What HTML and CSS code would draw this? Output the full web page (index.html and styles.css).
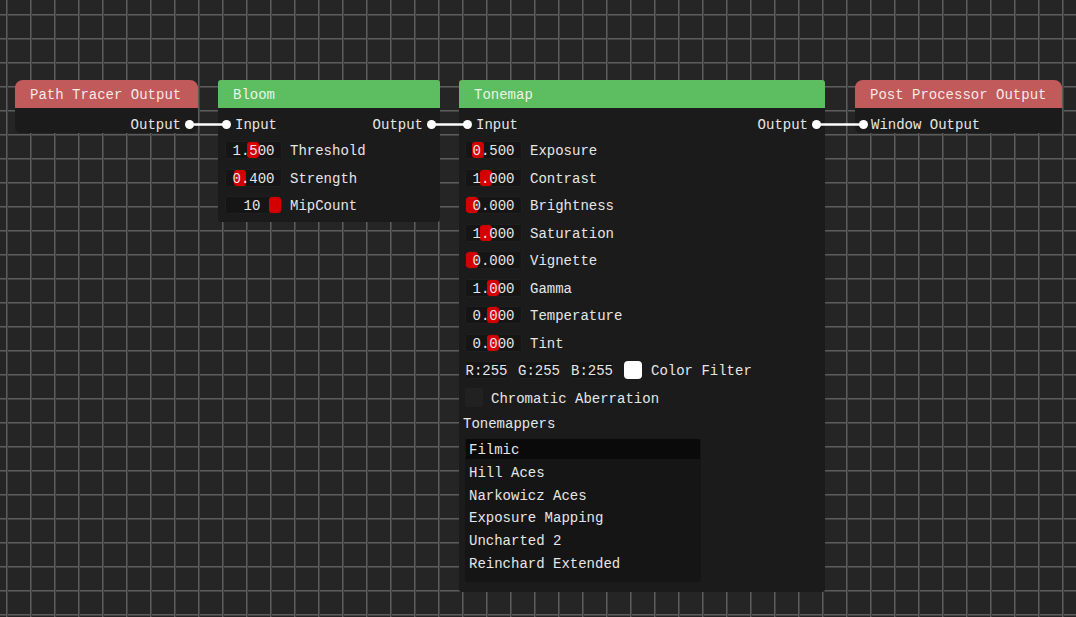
FILE: index.html
```html
<!DOCTYPE html>
<html>
<head>
<meta charset="utf-8">
<title>Node Editor</title>
<link rel="stylesheet" href="styles.css">
</head>
<body>
<div class="canvas">

  <div class="node node-path">
    <div class="title title-red">Path Tracer Output</div>
    <div class="body">
      <div class="pinrow out"><span class="txt">Output</span><i class="pin"></i></div>
    </div>
  </div>

  <div class="node node-bloom">
    <div class="title title-green">Bloom</div>
    <div class="body">
      <div class="pinrow"><i class="pin"></i><span class="txt">Input</span><span class="spacer"></span><span class="txt">Output</span><i class="pin"></i></div>
      <div class="params">
        <div class="param"><div class="drag"><b class="handle" style="left:22px"></b><span class="txt">1.500</span></div><span class="txt">Threshold</span></div>
        <div class="param"><div class="drag"><b class="handle" style="left:9px"></b><span class="txt">0.400</span></div><span class="txt">Strength</span></div>
        <div class="param"><div class="drag"><b class="handle" style="left:44px"></b><span class="txt intval">10</span></div><span class="txt">MipCount</span></div>
      </div>
    </div>
  </div>

  <div class="node node-tone">
    <div class="title title-green">Tonemap</div>
    <div class="body">
      <div class="pinrow"><i class="pin"></i><span class="txt">Input</span><span class="spacer"></span><span class="txt">Output</span><i class="pin"></i></div>
      <div class="params">
        <div class="param"><div class="drag"><b class="handle" style="left:7px"></b><span class="txt">0.500</span></div><span class="txt">Exposure</span></div>
        <div class="param"><div class="drag"><b class="handle" style="left:15px"></b><span class="txt">1.000</span></div><span class="txt">Contrast</span></div>
        <div class="param"><div class="drag"><b class="handle" style="left:1px"></b><span class="txt">0.000</span></div><span class="txt">Brightness</span></div>
        <div class="param"><div class="drag"><b class="handle" style="left:15px"></b><span class="txt">1.000</span></div><span class="txt">Saturation</span></div>
        <div class="param"><div class="drag"><b class="handle" style="left:1px"></b><span class="txt">0.000</span></div><span class="txt">Vignette</span></div>
        <div class="param"><div class="drag"><b class="handle" style="left:22px"></b><span class="txt">1.000</span></div><span class="txt">Gamma</span></div>
        <div class="param"><div class="drag"><b class="handle" style="left:22px"></b><span class="txt">0.000</span></div><span class="txt">Temperature</span></div>
        <div class="param"><div class="drag"><b class="handle" style="left:22px"></b><span class="txt">0.000</span></div><span class="txt">Tint</span></div>
        <div class="colorrow">
          <div class="cbox cbox-r">R:255</div>
          <div class="cbox cbox-g">G:255</div>
          <div class="cbox cbox-b">B:255</div>
          <div class="swatch"></div>
          <span class="txt cflabel">Color Filter</span>
        </div>
        <div class="checkrow"><div class="check"></div><span class="txt">Chromatic Aberration</span></div>
        <div class="section">Tonemappers</div>
      </div>
      <div class="list">
        <div class="item sel">Filmic</div>
        <div class="item">Hill Aces</div>
        <div class="item">Narkowicz Aces</div>
        <div class="item">Exposure Mapping</div>
        <div class="item">Uncharted 2</div>
        <div class="item">Reinchard Extended</div>
      </div>
    </div>
  </div>

  <div class="node node-post">
    <div class="title title-red">Post Processor Output</div>
    <div class="body">
      <div class="pinrow in"><i class="pin"></i><span class="txt">Window Output</span></div>
    </div>
  </div>

  <svg class="links" width="1076" height="617" viewBox="0 0 1076 617">
    <line x1="189.5" y1="124.5" x2="226.5" y2="124.5"/>
    <line x1="431.5" y1="124.5" x2="467.5" y2="124.5"/>
    <line x1="816.5" y1="124.5" x2="863.5" y2="124.5"/>
  </svg>
</div>
</body>
</html>
```

FILE: styles.css
```css
html, body {
  margin: 0;
  padding: 0;
  background: #252525;
}

body {
  font-family: "Liberation Mono", "DejaVu Sans Mono", monospace;
  font-size: 14px;
  color: #e6e6e6;
}

.canvas {
  position: relative;
  width: 1076px;
  height: 617px;
  overflow: hidden;
  background-color: #252525;
  background-image:
    linear-gradient(to right, #5c5c5c 0 1px, #424242 1px 2px, transparent 2px),
    linear-gradient(to bottom, #5c5c5c 0 1px, #424242 1px 2px, transparent 2px);
  background-size: 24px 24px;
  background-position: 6px 14px;
}

.node {
  position: absolute;
  top: 80px;
  display: flex;
  flex-direction: column;
}

.node-path { left: 15px; width: 183px; }
.node-bloom { left: 218px; width: 222px; }
.node-tone { left: 459px; width: 366px; }
.node-post { left: 855px; width: 207px; }

.title {
  box-sizing: border-box;
  height: 28px;
  line-height: 28px;
  padding-top: 1px;
  padding-left: 15px;
  color: rgba(255, 255, 255, 0.88);
  white-space: nowrap;
  overflow: hidden;
}

.title-red { background: #c15b5b; }
.title-green { background: #5cbe60; }

.node-path .title,
.node-post .title { border-radius: 8px 8px 0 0; }

.node-bloom .title,
.node-tone .title { border-radius: 3px 3px 0 0; }

.body {
  background: #1b1b1b;
  padding-top: 7px;
}

.node-path .body,
.node-post .body { border-radius: 0 0 6px 6px; }

.node-bloom .body {
  border-radius: 0 0 3px 3px;
  padding-bottom: 8px;
}

.node-tone .body {
  border-radius: 0 0 3px 3px;
  padding-bottom: 10px;
}

/* text inside 18px rows sits 1px below centre, as the pixel font does */
.txt {
  line-height: 18px;
  padding-top: 2px;
}

.pinrow {
  display: flex;
  align-items: center;
  height: 18px;
  padding: 0 4px;
  gap: 4px;
  white-space: nowrap;
}

.pinrow.out { justify-content: flex-end; }
.pinrow.in { gap: 3px; }

.spacer { flex: 1; }

.pin {
  display: block;
  flex: none;
  width: 9px;
  height: 9px;
  border-radius: 50%;
  background: #ffffff;
}

.params {
  display: flex;
  flex-direction: column;
  gap: 9.5px;
  margin-top: 8px;
  padding-left: 7px;
}

.node-tone .params { padding-left: 6px; }

.param {
  display: flex;
  align-items: center;
  height: 18px;
  gap: 8px;
  white-space: nowrap;
}

.drag {
  position: relative;
  flex: none;
  width: 57px;
  height: 18px;
  background: #151515;
  border-radius: 3px;
  box-shadow: inset 0 0 0 1px #1f1f1f;
  display: flex;
  align-items: center;
  justify-content: center;
}

.drag .txt {
  position: relative;
}

.drag .intval {
  margin-right: 3px;
}

.handle {
  position: absolute;
  top: 1px;
  width: 12px;
  height: 16px;
  background: #d40000;
  border-radius: 3px;
}

.colorrow {
  display: flex;
  align-items: center;
  height: 18px;
  gap: 10px;
  white-space: nowrap;
}

.cbox {
  box-sizing: border-box;
  height: 18px;
  line-height: 18px;
  padding-top: 1px;
  background: #151515;
  border-radius: 2px;
  box-shadow: inset 0 0 0 1px #1f1f1f;
  text-align: center;
}

.cbox-r { width: 43px; }
.cbox-g { width: 42px; }
.cbox-b { width: 44px; }

.swatch {
  width: 18px;
  height: 18px;
  background: #ffffff;
  border-radius: 4px;
}

.cflabel { margin-left: -1px; }

.checkrow {
  display: flex;
  align-items: center;
  height: 18px;
  gap: 8px;
  white-space: nowrap;
}

.check {
  width: 18px;
  height: 19px;
  background: #212121;
  border-radius: 2px;
}

.section {
  box-sizing: border-box;
  height: 18px;
  line-height: 18px;
  padding-top: 1px;
  margin-top: -2px;
  margin-left: -2px;
}

.list {
  box-sizing: border-box;
  margin-top: 7px;
  margin-left: 6px;
  width: 236px;
  height: 143px;
  padding: 0 1px;
  background: #151515;
  border-radius: 2px;
  display: flex;
  flex-direction: column;
  gap: 2.8px;
}

.item {
  box-sizing: border-box;
  height: 20px;
  line-height: 20px;
  padding-top: 1px;
  padding-left: 3px;
  white-space: nowrap;
  overflow: hidden;
}

.item.sel { background: #0a0a0a; }

.links {
  position: absolute;
  left: 0;
  top: 0;
  pointer-events: none;
}

.links line {
  stroke: #ffffff;
  stroke-width: 2.5;
}
```
